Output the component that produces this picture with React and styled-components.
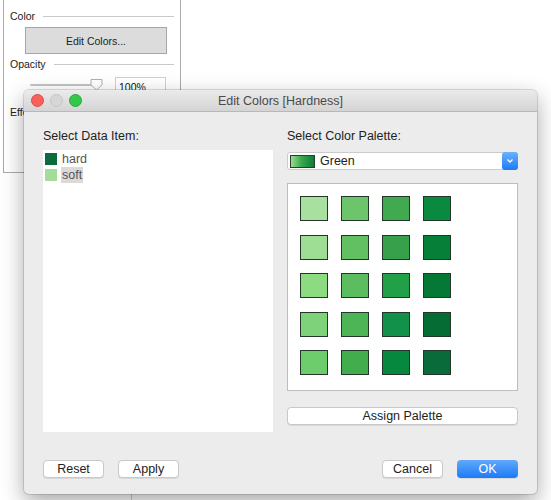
import React from "react";
import styled, { createGlobalStyle } from "styled-components";

const GlobalStyle = createGlobalStyle`
  html, body {
    margin: 0;
    padding: 0;
    background: #ffffff;
    font-family: "Liberation Sans", Arial, sans-serif;
  }
`;

const palette = [
  ["#a8e09f", "#6cc56a", "#41a94f", "#0a8a3e"],
  ["#9edd94", "#63c062", "#36a04a", "#067f38"],
  ["#8ddb80", "#5bbd5f", "#21a047", "#067836"],
  ["#7ed37a", "#4db555", "#12914a", "#056d33"],
  ["#6dcc6c", "#41ad4d", "#06893f", "#0a6b3a"],
];

const items = [
  { name: "hard", color: "#0b6b3c" },
  { name: "soft", color: "#a3dc9b", selected: true },
];

export default function App() {
  return (
    <>
      <GlobalStyle />
      <Desktop>
        <Inspector>
          <SectionHead>
            <span>Color</span>
          </SectionHead>
          <PanelButton>Edit Colors...</PanelButton>
          <SectionHead $gap={2}>
            <span>Opacity</span>
          </SectionHead>
          <SliderRow>
            <Track>
              <Thumb viewBox="0 0 13 13">
                <path d="M1 1.5 H12 V7 L6.5 12 L1 7 Z" fill="#fff" stroke="#b0b0b0" />
              </Thumb>
            </Track>
            <PercentInput>100%</PercentInput>
          </SliderRow>
          <SectionHead $gap={11}>
            <span>Effects</span>
          </SectionHead>
        </Inspector>

        <Dialog>
          <TitleBar>
            <Lights>
              <Light $color="#fc605b" $border="#de4a44" />
              <Light $color="#d6d6d6" $border="#c4c4c4" />
              <Light $color="#34c84a" $border="#26a93a" />
            </Lights>
            <Title>Edit Colors [Hardness]</Title>
            <span />
          </TitleBar>

          <Body>
            <Columns>
              <Column>
                <Label>Select Data Item:</Label>
                <ItemList>
                  {items.map((it) => (
                    <ItemRow key={it.name}>
                      <ItemSwatch $color={it.color} />
                      <ItemName $selected={it.selected}>{it.name}</ItemName>
                    </ItemRow>
                  ))}
                </ItemList>
              </Column>

              <Column>
                <Label>Select Color Palette:</Label>
                <Dropdown>
                  <GradientSwatch />
                  <DropText>Green</DropText>
                  <DropArrow>
                    <svg width="8" height="6" viewBox="0 0 8 6">
                      <path d="M1.5 1.5 L4 4 L6.5 1.5" fill="none" stroke="#fff" strokeWidth="1.3" />
                    </svg>
                  </DropArrow>
                </Dropdown>
                <PaletteBox>
                  <SwatchGrid>
                    {palette.flat().map((c, i) => (
                      <Swatch key={i} $color={c} />
                    ))}
                  </SwatchGrid>
                </PaletteBox>
                <MacButton $wide>Assign Palette</MacButton>
              </Column>
            </Columns>

            <Footer>
              <ButtonGroup>
                <MacButton>Reset</MacButton>
                <MacButton>Apply</MacButton>
              </ButtonGroup>
              <ButtonGroup>
                <MacButton>Cancel</MacButton>
                <MacButton $primary>OK</MacButton>
              </ButtonGroup>
            </Footer>
          </Body>
        </Dialog>
      </Desktop>
    </>
  );
}

const Desktop = styled.div`
  position: relative;
  width: 551px;
  height: 500px;
  overflow: hidden;
  background: linear-gradient(to right, transparent 131px, #cfcfcf 131px, #cfcfcf 132px, transparent 132px), #ffffff;
`;

const Inspector = styled.div`
  margin-left: 3px;
  width: 164px;
  height: 164px;
  padding: 8px 6px 0 6px;
  background: #ffffff;
  border: 1px solid #a9a9a9;
  border-top: none;
  font-size: 10.5px;
  color: #222;
`;

const SectionHead = styled.div`
  display: flex;
  align-items: center;
  height: 16px;
  margin-top: ${(p) => p.$gap || 0}px;
  &::after {
    content: "";
    flex: 1;
    height: 1px;
    background: #c9c9c9;
    margin-left: 8px;
  }
`;

const PanelButton = styled.div`
  margin: 3px 0 0 15px;
  width: 140px;
  height: 25px;
  display: flex;
  align-items: center;
  justify-content: center;
  background: #dcdcdc;
  border: 1px solid #a6a6a6;
  color: #222;
`;

const SliderRow = styled.div`
  display: flex;
  align-items: center;
  margin-top: 5px;
  padding-left: 20px;
  height: 16px;
`;

const Track = styled.div`
  position: relative;
  width: 66px;
  height: 2px;
  border-radius: 1px;
  background: #c4c4c4;
`;

const Thumb = styled.svg`
  position: absolute;
  left: 60px;
  top: -6px;
  width: 13px;
  height: 13px;
`;

const PercentInput = styled.div`
  margin-left: 19px;
  width: 46px;
  height: 15px;
  padding-left: 3px;
  border: 1px solid #d0d0d0;
  display: flex;
  align-items: flex-end;
  font-size: 10.5px;
  color: #111;
`;

const Dialog = styled.div`
  position: absolute;
  left: 24px;
  top: 90px;
  width: 513px;
  height: 404px;
  display: flex;
  flex-direction: column;
  background: #ececec;
  border-radius: 5px;
  box-shadow: 0 0 0 1px rgba(0, 0, 0, 0.12), 0 8px 22px rgba(0, 0, 0, 0.35);
  overflow: hidden;
`;

const TitleBar = styled.div`
  display: grid;
  grid-template-columns: 1fr auto 1fr;
  align-items: center;
  height: 21px;
  background: linear-gradient(#ebebeb, #d4d4d4);
  border-bottom: 1px solid #b8b8b8;
`;

const Lights = styled.div`
  display: flex;
  gap: 6px;
  padding-left: 7px;
`;

const Light = styled.span`
  width: 11px;
  height: 11px;
  border-radius: 50%;
  background: ${(p) => p.$color};
  border: 0.5px solid ${(p) => p.$border};
`;

const Title = styled.div`
  font-size: 12.5px;
  color: #4a4a4a;
`;

const Body = styled.div`
  flex: 1;
  display: flex;
  flex-direction: column;
  padding: 16px 19px 16px 19px;
  font-size: 12.5px;
  color: #222;
`;

const Columns = styled.div`
  display: grid;
  grid-template-columns: 230px 231px;
  column-gap: 14px;
  height: 304px;
`;

const Column = styled.div`
  display: flex;
  flex-direction: column;
`;

const Label = styled.div`
  height: 16px;
  line-height: 16px;
  margin-bottom: 6px;
`;

const ItemList = styled.div`
  flex: 1;
  background: #ffffff;
  padding-top: 1px;
`;

const ItemRow = styled.div`
  display: flex;
  align-items: center;
  height: 16px;
  padding-left: 2px;
`;

const ItemSwatch = styled.span`
  width: 12px;
  height: 12px;
  background: ${(p) => p.$color};
`;

const ItemName = styled.span`
  margin-left: 4px;
  padding: 0 1px;
  line-height: 16px;
  color: #555;
  background: ${(p) => (p.$selected ? "#dadada" : "transparent")};
`;

const Dropdown = styled.div`
  display: flex;
  align-items: center;
  height: 18px;
  margin-top: 2px;
  background: #ffffff;
  border: 1px solid #cbcbcb;
  border-radius: 3px;
  box-sizing: border-box;
`;

const GradientSwatch = styled.span`
  width: 23px;
  height: 11px;
  margin-left: 2px;
  border: 1px solid #2c3b2c;
  background: linear-gradient(to right, #9bdc8f, #3aa84d 45%, #0a7f3a);
`;

const DropText = styled.span`
  flex: 1;
  margin-left: 5px;
`;

const DropArrow = styled.span`
  width: 16px;
  height: 18px;
  margin: -1px -1px -1px 0;
  border-radius: 3px;
  background: linear-gradient(#6cb1fb, #1a7cf6);
  display: flex;
  align-items: center;
  justify-content: center;
`;

const PaletteBox = styled.div`
  margin-top: 13px;
  height: 208px;
  box-sizing: border-box;
  background: #ffffff;
  border: 1px solid #bdbdbd;
  padding: 12px;
`;

const SwatchGrid = styled.div`
  display: grid;
  grid-template-columns: repeat(4, 28px);
  grid-auto-rows: 25px;
  column-gap: 13px;
  row-gap: 13.5px;
`;

const Swatch = styled.span`
  background: ${(p) => p.$color};
  border: 1px solid #24352a;
  box-sizing: border-box;
`;

const MacButton = styled.div`
  box-sizing: border-box;
  height: 18px;
  width: ${(p) => (p.$wide ? "auto" : "61px")};
  margin-top: ${(p) => (p.$wide ? "16px" : "0")};
  display: flex;
  align-items: center;
  justify-content: center;
  font-size: 12.5px;
  border-radius: 4px;
  color: ${(p) => (p.$primary ? "#ffffff" : "#222")};
  background: ${(p) => (p.$primary ? "linear-gradient(#62a9fb, #1a7cf6)" : "#ffffff")};
  border: ${(p) => (p.$primary ? "none" : "1px solid #c8c8c8")};
  box-shadow: 0 1px 0 rgba(0, 0, 0, 0.08);
`;

const Footer = styled.div`
  display: flex;
  justify-content: space-between;
  margin-top: 28px;
`;

const ButtonGroup = styled.div`
  display: flex;
  gap: 14px;
`;
